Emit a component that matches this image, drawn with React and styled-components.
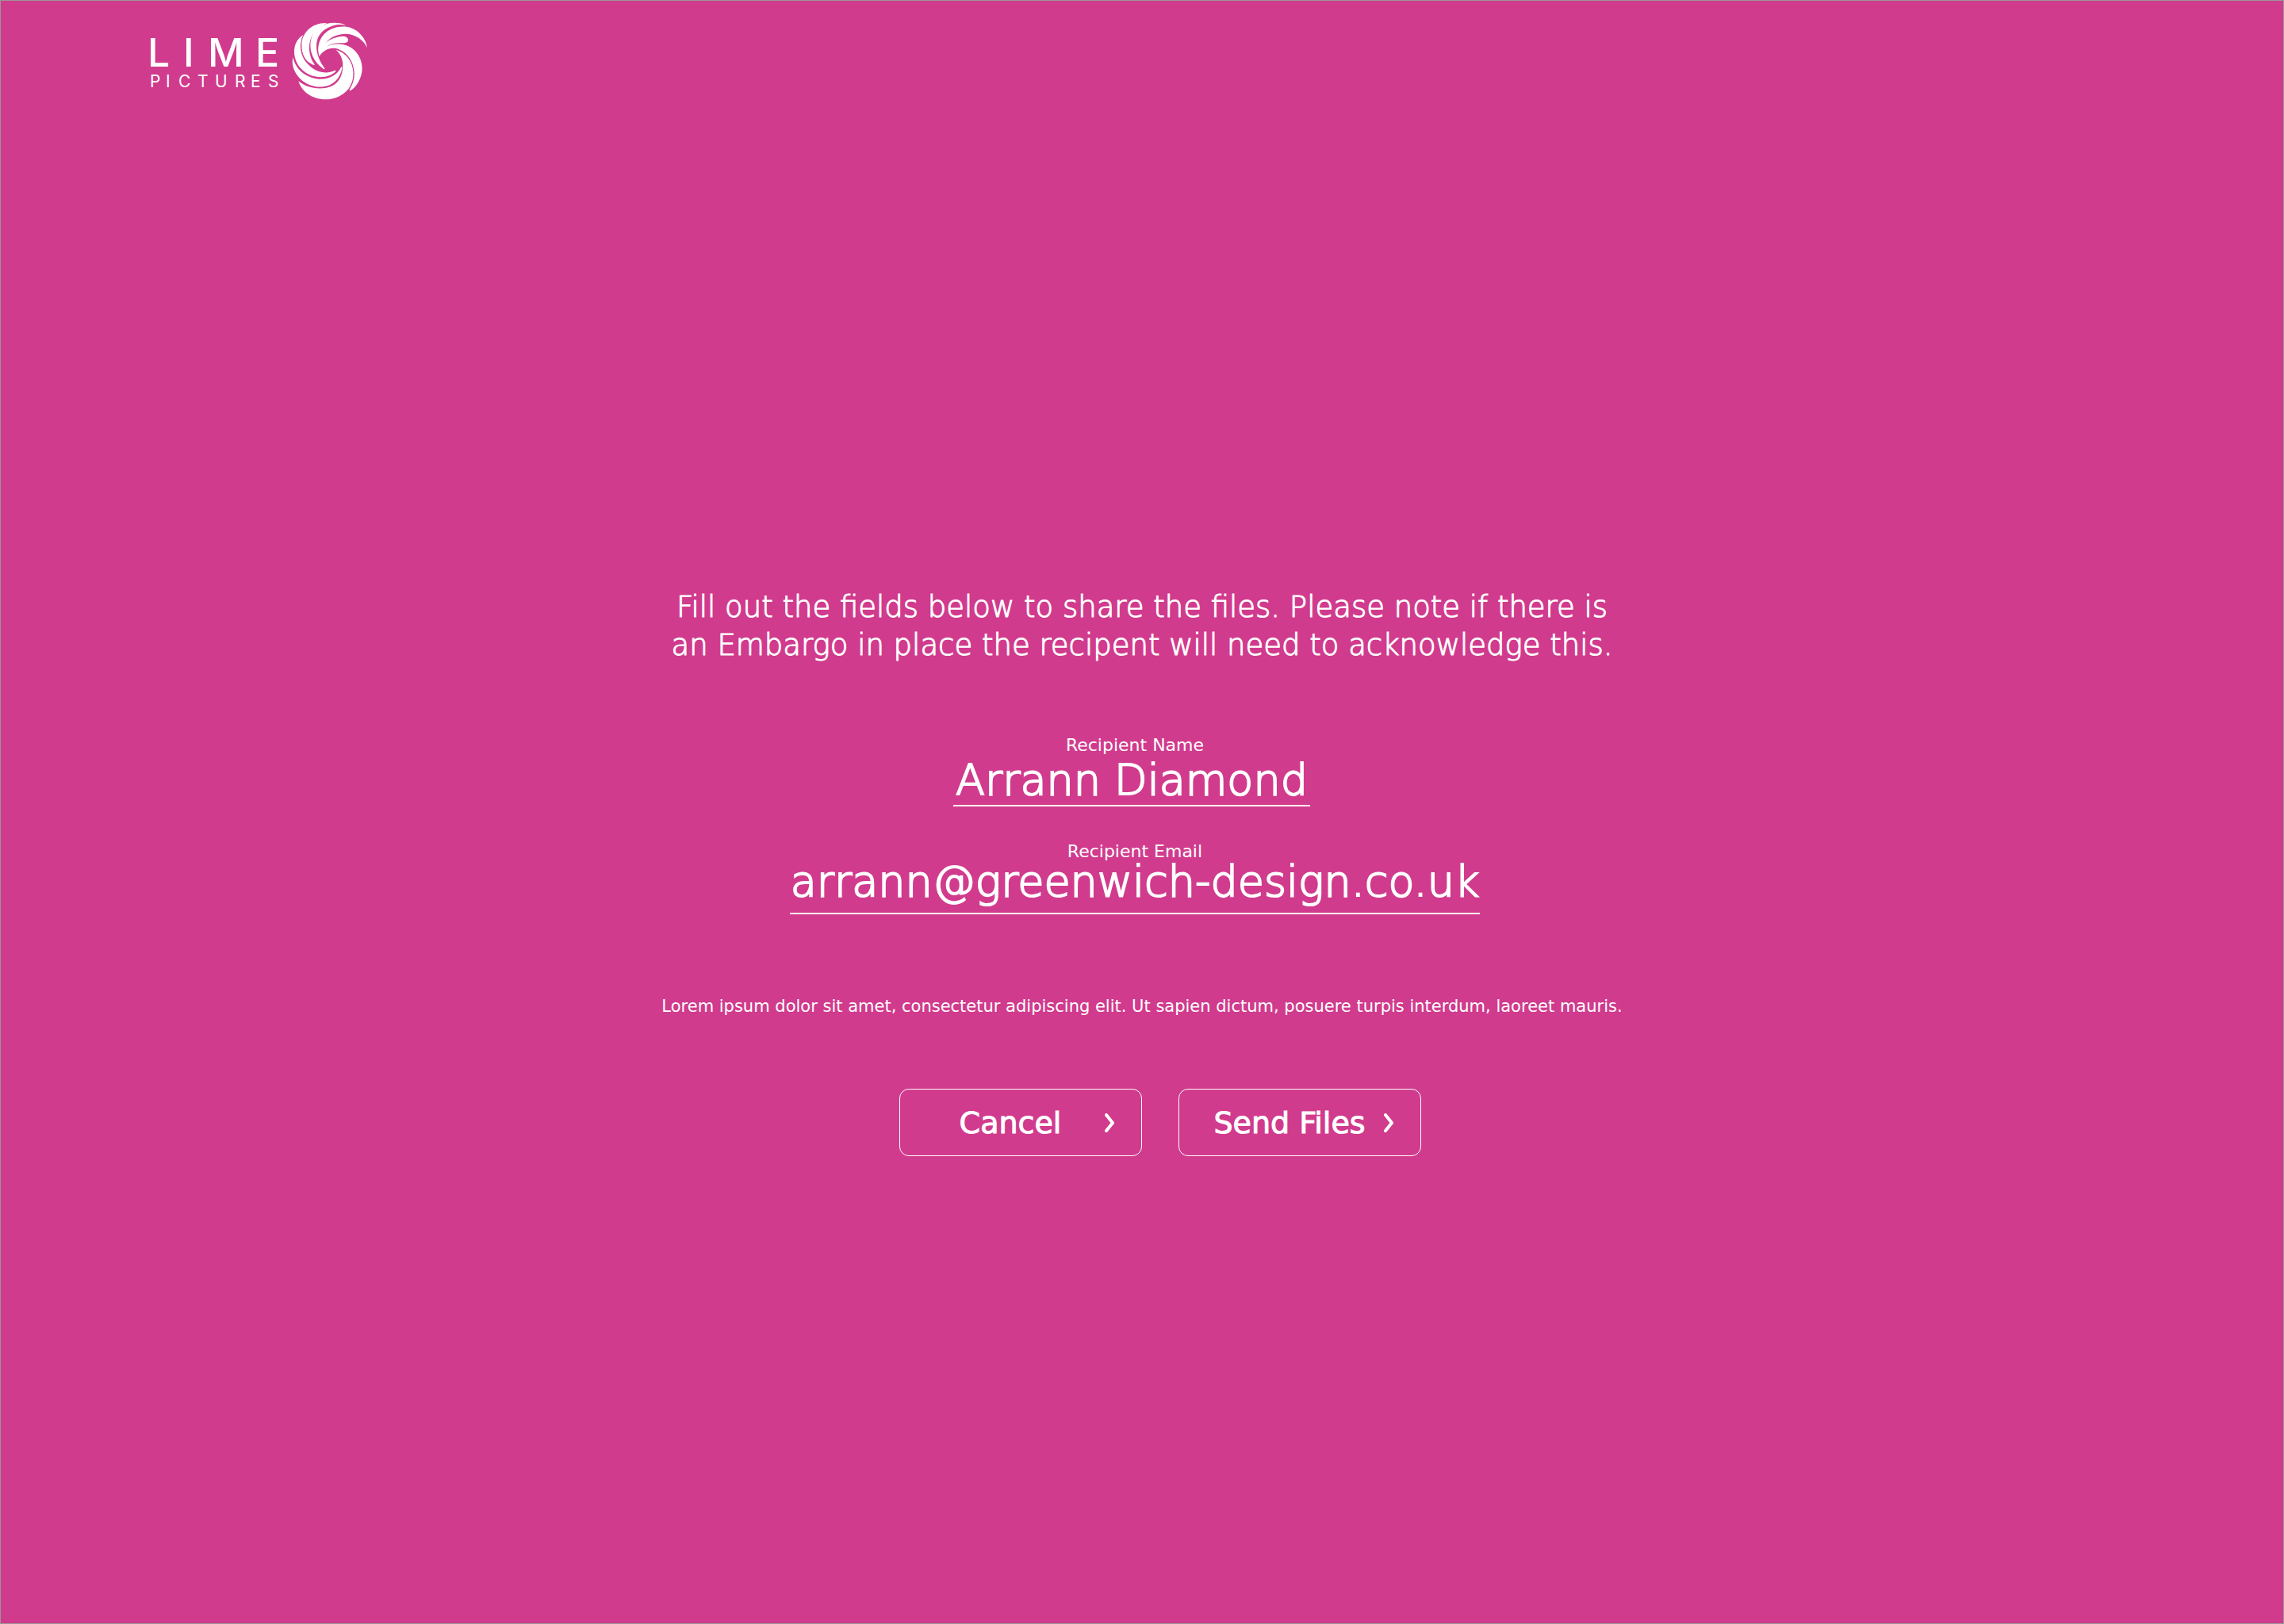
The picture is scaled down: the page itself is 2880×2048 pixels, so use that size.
import React from 'react';
import styled, { createGlobalStyle } from 'styled-components';

const GlobalStyle = createGlobalStyle`
  *, *::before, *::after { box-sizing: border-box; }
  body {
    margin: 0;
    background: #d13b8d;
    color: #fff;
    font-family: "DejaVu Sans", Verdana, sans-serif;
  }
`;

const Page = styled.div`
  min-height: 100vh;
  border: 1px solid #979797;
`;

const Header = styled.header`
  padding: 16px 180px;
`;

const HomeLink = styled.a`
  display: inline-flex;
  color: inherit;
  text-decoration: none;
`;

const LogoDrawing = styled.svg`
  display: block;
  width: 288px;
  height: 120px;
  overflow: visible;
  fill: currentColor;
`;

const LogoText = styled.text`
  font-family: Inter, "Liberation Sans", sans-serif;
  font-size: ${p => p.$size}px;
  font-weight: ${p => p.$weight};
`;

const Main = styled.main`
  display: flex;
  justify-content: center;
  padding: 585px 40px 80px;
`;

const ShareForm = styled.form`
  display: flex;
  flex-direction: column;
  align-items: center;
`;

const Intro = styled.p`
  max-width: 1240px;
  margin: 0 0 90px;
  font-size: 37px;
  font-weight: 200;
  line-height: 48px;
  text-align: center;
  -webkit-text-stroke: 1px currentColor;
`;

const Fields = styled.div`
  display: flex;
  flex-direction: column;
  align-items: center;
  gap: 45px;
  padding-right: 18px;
`;

const Field = styled.div`
  display: flex;
  flex-direction: column;
  align-items: center;
`;

const Label = styled.label`
  font-size: 22px;
  line-height: 24px;
`;

const Input = styled.input`
  width: ${p => p.$width}px;
  max-width: 100%;
  height: ${p => (p.$roomy ? 74 : 65)}px;
  margin: ${p => (p.$roomy ? '-7px 0 0' : '0 8px 0 0')};
  padding: 0 0 ${p => (p.$roomy ? 8 : 0)}px;
  border: 0;
  border-bottom: 2px solid #fff;
  border-radius: 0;
  outline: 0;
  background: transparent;
  color: inherit;
  font-family: inherit;
  font-size: 54px;
  font-weight: 200;
  line-height: 63px;
  text-align: center;
  -webkit-text-stroke: 2px currentColor;
`;

const Note = styled.p`
  margin: 104px 0 92px;
  font-size: 21px;
  line-height: 24px;
  text-align: center;
`;

const Actions = styled.div`
  display: flex;
  gap: 46px;
  padding-left: 46px;
`;

const Button = styled.button`
  display: flex;
  align-items: center;
  width: 306px;
  height: 85px;
  padding: 0 34px 0 20px;
  border: 1px solid #fff;
  border-radius: 12px;
  background: transparent;
  color: inherit;
  font: 400 38px/44px "DejaVu Sans", Verdana, sans-serif;
  cursor: pointer;
`;

const ButtonText = styled.span`
  flex: 1;
  text-align: center;
  white-space: nowrap;
  -webkit-text-stroke: 1px currentColor;
`;

const Chevron = styled.svg`
  flex: none;
  width: 12px;
  height: 24px;
  fill: none;
  stroke: currentColor;
  stroke-width: 4;
  stroke-linecap: round;
  stroke-linejoin: round;
`;

function Logo() {
  return (
    <LogoDrawing viewBox="-8 0 288 120" role="img" aria-label="Lime Pictures">
      <LogoText $size={50} $weight={500} x="-3 42 73 133" y="67">LIME</LogoText>
      <LogoText $size={21} $weight={400} x="0 20 36 60 82 107 127 149" y="93">PICTURES</LogoText>
      <g transform="translate(166 -2) scale(0.33333)">
        <path d="M324 136C312 108 282 85 245 83C212 82 181 97 165 119C175 108 195 97 225 93C241 91 252 97 252 106C252 116 242 119 228 118C205 117 185 121 170 132C185 122 205 120 225 122C270 126 305 165 305 215C304 250 283 285 262 297C257 299 255 296 259 290C272 270 276 250 275 228C272 182 242 146 205 138C182 133 157 146 143 168C130 125 149 84 186 66C205 57 230 54 250 57C290 65 320 100 324 136Z" />
        <path d="M243 51C215 44 192 52 174 61C132 83 124 125 140 172C145 188 155 202 163 214C165 217 160 218 156 214C120 188 105 150 110 112C115 80 135 53 170 45C195 39 228 41 243 51Z" />
        <path d="M172 42C125 62 104 98 105 138C106 165 114 184 124 197C127 201 122 202 117 199C90 187 75 160 76 123C78 78 115 40 172 42Z" />
        <path d="M82 87C65 120 68 165 100 198C126 227 168 238 201 222C206 220 207 224 203 227C180 248 140 253 104 237C68 220 46 185 48 145C50 120 62 99 82 87Z" />
        <path d="M44 172C51 215 90 249 140 254C180 256 210 239 225 210C228 205 230 208 229 213C222 252 195 279 158 283C105 288 62 257 46 215C40 198 40 185 44 172Z" />
        <path d="M64 262C90 284 130 294 170 287C211 279 233 246 232 200C231 176 222 157 205 143C244 153 270 188 271 228C272 255 266 272 254 290C231 318 198 332 165 331C116 331 76 302 64 262Z" />
      </g>
    </LogoDrawing>
  );
}

function ActionButton({ children, type }) {
  return (
    <Button type={type}>
      <ButtonText>{children}</ButtonText>
      <Chevron viewBox="0 0 12 24" aria-hidden="true">
        <path d="M2 2L10 12L2 22" />
      </Chevron>
    </Button>
  );
}

export default function App() {
  return (
    <Page>
      <GlobalStyle />
      <Header>
        <HomeLink href="#home"><Logo /></HomeLink>
      </Header>
      <Main>
        <ShareForm onSubmit={e => e.preventDefault()}>
          <Intro>
            Fill out the fields below to share the files. Please note if there is
            <br />
            an Embargo in place the recipent will need to acknowledge this.
          </Intro>
          <Fields>
            <Field>
              <Label htmlFor="recipient-name">Recipient Name</Label>
              <Input id="recipient-name" type="text" $width={450} defaultValue="Arrann Diamond" spellCheck={false} />
            </Field>
            <Field>
              <Label htmlFor="recipient-email">Recipient Email</Label>
              <Input id="recipient-email" type="email" $width={870} $roomy defaultValue="arrann@greenwich-design.co.uk" />
            </Field>
          </Fields>
          <Note>
            Lorem ipsum dolor sit amet, consectetur adipiscing elit. Ut sapien dictum, posuere turpis interdum, laoreet mauris.
          </Note>
          <Actions>
            <ActionButton type="button">Cancel</ActionButton>
            <ActionButton type="submit">Send Files</ActionButton>
          </Actions>
        </ShareForm>
      </Main>
    </Page>
  );
}
